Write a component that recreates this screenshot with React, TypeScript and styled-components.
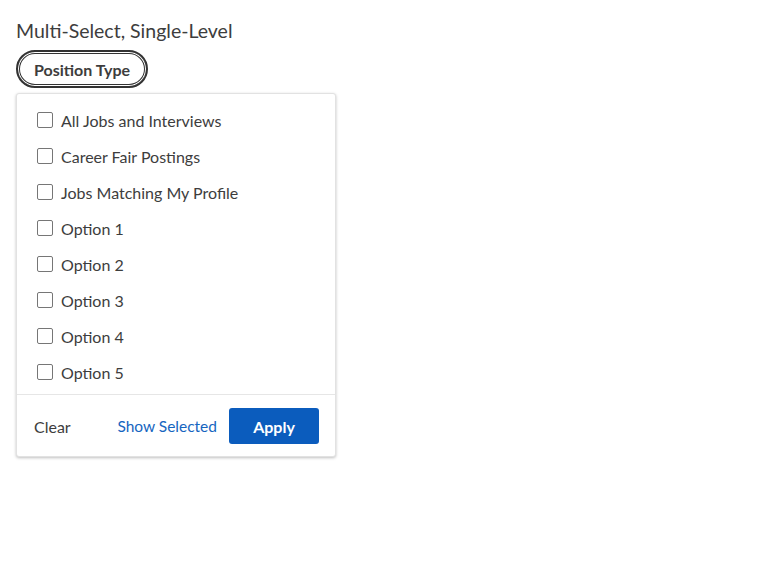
import React from "react";
import styled, { createGlobalStyle } from "styled-components";

const Global = createGlobalStyle`
  body { margin: 0; background: #fff; font-family: Lato, "Noto Sans", sans-serif; color: #3d3d3d; }
`;

const Page = styled.div`
  padding: 18px 16px;
  display: flex;
  flex-direction: column;
  align-items: flex-start;
`;

const Title = styled.h2`
  margin: 0 0 6px 0;
  font-size: 19.5px;
  font-weight: 400;
  line-height: 26px;
  color: #3d3d3d;
`;

const Trigger = styled.button`
  font-family: inherit;
  font-size: 16px;
  font-weight: 700;
  color: #3d3d3d;
  background: #fff;
  height: 38px;
  padding: 0 16px;
  border: 2px solid #333;
  border-radius: 19px;
  box-shadow: inset 0 0 0 1px #fff, inset 0 0 0 2px #333;
  cursor: pointer;
`;

const Panel = styled.div`
  margin-top: 5px;
  width: 320px;
  box-sizing: border-box;
  border: 1px solid #e2e2e2;
  border-radius: 3px;
  box-shadow: 0 1px 3px rgba(0, 0, 0, 0.25);
  background: #fff;
`;

const List = styled.ul`
  list-style: none;
  margin: 0;
  padding: 8px 0 4px;
`;

const Row = styled.li`
  height: 36px;
  display: flex;
  align-items: center;
  padding-left: 20px;
  gap: 8px;
  font-size: 16px;
  color: #3d3d3d;
`;

const Box = styled.span`
  width: 16px;
  height: 16px;
  box-sizing: border-box;
  border: 1px solid #767676;
  border-radius: 2px;
  background: #fff;
`;

const Footer = styled.div`
  border-top: 1px solid #e6e6e6;
  display: flex;
  align-items: center;
  padding: 13px 16px 12px 17px;
`;

const TextButton = styled.button<{ $link?: boolean }>`
  font-family: inherit;
  font-size: ${(p) => (p.$link ? "15.5px" : "16px")};
  background: none;
  border: none;
  padding: 0;
  color: ${(p) => (p.$link ? "#1565c0" : "#3d3d3d")};
  cursor: pointer;
`;

const Spacer = styled.div`
  flex: 1;
`;

const Primary = styled.button`
  font-family: inherit;
  font-size: 16px;
  font-weight: 700;
  color: #fff;
  background: #0b5cbd;
  border: none;
  border-radius: 3px;
  width: 90px;
  height: 36px;
  margin-left: 12px;
  cursor: pointer;
`;

const options = [
  "All Jobs and Interviews",
  "Career Fair Postings",
  "Jobs Matching My Profile",
  "Option 1",
  "Option 2",
  "Option 3",
  "Option 4",
  "Option 5",
];

export default function App() {
  return (
    <>
      <Global />
      <Page>
        <Title>Multi-Select, Single-Level</Title>
        <Trigger>Position Type</Trigger>
        <Panel>
          <List>
            {options.map((o) => (
              <Row key={o}>
                <Box />
                {o}
              </Row>
            ))}
          </List>
          <Footer>
            <TextButton>Clear</TextButton>
            <Spacer />
            <TextButton $link>Show Selected</TextButton>
            <Primary>Apply</Primary>
          </Footer>
        </Panel>
      </Page>
    </>
  );
}
